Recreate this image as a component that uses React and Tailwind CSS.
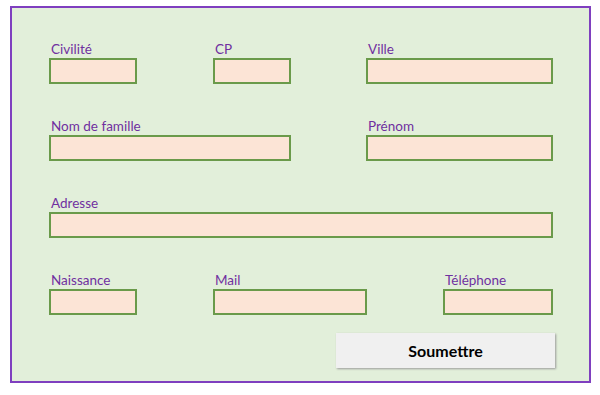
function Field({ label, width, className = '' }) {
  return (
    <div className={`flex flex-col ${className}`}>
      <span className="h-[17px] pl-[2px] text-[13.5px] leading-[17px] text-[#7030a0]">{label}</span>
      <div className={`h-[26px] border-2 border-[#6a9a4a] bg-[#fce4d6] ${width}`} />
    </div>
  );
}

export default function App() {
  return (
    <main className="h-[395px] w-[600px] bg-white pt-[6px] pl-[10px]" style={{ fontFamily: 'Lato, "Open Sans", sans-serif' }}>
      <div className="flex h-[377px] w-[581px] flex-col border-2 border-[#7f3fbf] bg-[#e2efda] pl-[37px] pt-[33px]">
        <div className="flex">
          <Field label="Civilité" width="w-[88px]" />
          <Field label="CP" width="w-[78px]" className="ml-[76px]" />
          <Field label="Ville" width="w-[187px]" className="ml-[75px]" />
        </div>

        <div className="mt-[34px] flex">
          <Field label="Nom de famille" width="w-[242px]" />
          <Field label="Prénom" width="w-[187px]" className="ml-[75px]" />
        </div>

        <div className="mt-[34px] flex">
          <Field label="Adresse" width="w-[504px]" />
        </div>

        <div className="mt-[34px] flex">
          <Field label="Naissance" width="w-[88px]" />
          <Field label="Mail" width="w-[154px]" className="ml-[76px]" />
          <Field label="Téléphone" width="w-[110px]" className="ml-[76px]" />
        </div>

        <div className="mt-[18px] flex">
          <button className="ml-[287px] h-[35px] w-[219px] bg-[#f0f0f0] text-[16px] font-bold text-black shadow-[1px_1px_2px_#9a9a9a]">
            Soumettre
          </button>
        </div>
      </div>
    </main>
  );
}
